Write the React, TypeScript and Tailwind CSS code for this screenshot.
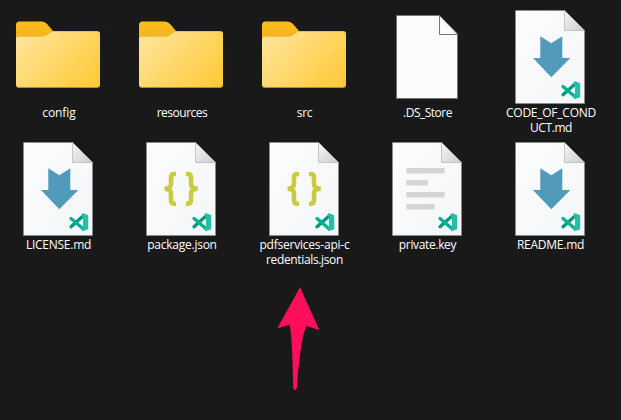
import type { ReactNode } from "react";

type Kind = "folder" | "blank" | "markdown" | "json" | "text";

interface Item {
  kind: Kind;
  lines: { text: string; style: string }[];
}

const items: Item[] = [
  { kind: "folder", lines: [{ text: "config", style: "tracking-[-0.05px] pl-px" }] },
  { kind: "folder", lines: [{ text: "resources", style: "tracking-[-0.5px] pl-px" }] },
  { kind: "folder", lines: [{ text: "src", style: "tracking-[-0.3px]" }] },
  { kind: "blank", lines: [{ text: ".DS_Store", style: "tracking-[-0.5px]" }] },
  {
    kind: "markdown",
    lines: [
      { text: "CODE_OF_COND", style: "tracking-[-0.25px] pl-px" },
      { text: "UCT.md", style: "tracking-[-0.4px] pl-px" },
    ],
  },
  { kind: "markdown", lines: [{ text: "LICENSE.md", style: "tracking-[-0.25px]" }] },
  { kind: "json", lines: [{ text: "package.json", style: "tracking-[-0.25px] pl-px" }] },
  {
    kind: "json",
    lines: [
      { text: "pdfservices-api-c", style: "tracking-[-0.22px]" },
      { text: "redentials.json", style: "tracking-[-0.35px]" },
    ],
  },
  { kind: "text", lines: [{ text: "private.key", style: "tracking-[-0.35px]" }] },
  { kind: "markdown", lines: [{ text: "README.md", style: "tracking-[-0.25px]" }] },
];

function Folder() {
  return (
    <>
      <path d="M6 16a3.500 3.500 0 0 1 3.500-3.500H31c3 0 4.500 1 6.500 3l5.500 6.500H87a3 3 0 0 1 3 3V50H6z" fill="url(#tab)" />
      <path d="M6 30.500a3 3 0 0 1 3-3H31.500c2.500 0 4-.5 6-2l3.500-2.200c1-.7 2-.8 3.500-.8H87a3 3 0 0 1 3 3V76a3 3 0 0 1-3 3H9a3 3 0 0 1-3-3z" fill="#c48a10" />
      <path d="M6 30.500a3 3 0 0 1 3-3H31.500c2.500 0 4-.5 6-2l3.500-2.200c1-.7 2-.8 3.500-.8H87a3 3 0 0 1 3 3V75a3 3 0 0 1-3 3H9a3 3 0 0 1-3-3z" fill="url(#front)" />
    </>
  );
}

function Blank() {
  return (
    <g fill="#fbfbfb" stroke="#747474">
      <path d="M17.500 6.500H60.500L78.500 25V89.500H17.500z" />
      <path d="M60.500 6.500V25.500H78.500" fill="none" />
    </g>
  );
}

function CodeBadge() {
  return (
    <g>
      <path d="M61 85.700 72.500 75.500" stroke="#009a7c" strokeWidth="3.300" strokeLinecap="round" />
      <path d="M61 77.500 72.500 87.300" stroke="#00b294" strokeWidth="3.300" strokeLinecap="round" />
      <path d="M72.700 72 78.200 74.200V88.300L72.700 90.300 71.300 88.500 73 86V76.500L71.300 74z" fill="#24bfa5" />
    </g>
  );
}

function Page({ children }: { children: ReactNode }) {
  return (
    <>
      <path d="M13.500 1.500H62.500L82.500 21.500V94.500H13.500z" fill="url(#page)" stroke="#8b8c8d" strokeWidth=".8" />
      <path d="M62.500 1.500V21.500H82.500z" fill="url(#fold)" stroke="#b9babb" strokeWidth=".8" />
      {children}
      <CodeBadge />
    </>
  );
}

function Icon({ kind }: { kind: Kind }) {
  return (
    <svg width="97" height="96" viewBox="0 0 97 96" fill="none" className="block">
      <defs>
        <linearGradient id="tab" x1="0" y1="0" x2="0" y2="1">
          <stop offset="0" stopColor="#fdbd1b" />
          <stop offset=".4" stopColor="#f4b61f" />
        </linearGradient>
        <linearGradient id="front" gradientUnits="userSpaceOnUse" x1="14" y1="20" x2="82" y2="84">
          <stop offset="0" stopColor="#ffe59b" />
          <stop offset="1" stopColor="#ffc936" />
        </linearGradient>
        <linearGradient id="page" x1="0" y1="0" x2="1" y2="1">
          <stop offset="0" stopColor="#fbfcfc" />
          <stop offset="1" stopColor="#f5f6f8" />
        </linearGradient>
        <linearGradient id="fold" x1="0" y1="0" x2="1" y2="1">
          <stop offset="0" stopColor="#f7f7f7" />
          <stop offset="1" stopColor="#cccccc" />
        </linearGradient>
      </defs>
      {kind === "folder" && <Folder />}
      {kind === "blank" && <Blank />}
      {kind === "markdown" && (
        <Page>
          <path d="M38.300 27.300 49.300 34.300 60.300 27.300V49H68.300L49.300 68.300 31 49H38.300z" fill="#519aba" />
        </Page>
      )}
      {kind === "json" && (
        <Page>
          <g stroke="#cbcb41" strokeWidth="4.600">
            <path d="M43 33H41.500Q38 33 38 36.500V42.500Q38 47.700 31.500 47.700Q38 47.700 38 53V59Q38 62.700 41.500 62.700H43" />
            <path d="M53 33H54.500Q58 33 58 36.500V42.500Q58 47.700 64.800 47.700Q58 47.700 58 53V59Q58 62.700 54.500 62.700H53" />
          </g>
        </Page>
      )}
      {kind === "text" && (
        <Page>
          <path d="M27.300 27H65.700v5.600H27.300zM27.300 39H48.700v5.600H27.300zM27.300 51H65.700v5.600H27.300zM27.300 63H55.700v5.600H27.300z" fill="#d4d6d6" />
        </Page>
      )}
    </svg>
  );
}

export default function App() {
  return (
    <main className="relative h-[420px] w-[621px] overflow-hidden bg-[#191919] pt-[9px] font-['Open_Sans','Noto_Sans',sans-serif] text-white">
      <div className="-ml-[3px] grid grid-cols-[repeat(5,123px)] grid-rows-[132px_132px]">
        {items.map((item) => (
          <div key={item.lines[0].text} className="flex flex-col items-center">
            <Icon kind={item.kind} />
            <div className="flex flex-col items-center text-[12px] leading-[15px] whitespace-nowrap">
              {item.lines.map((line) => (
                <span key={line.text} className={line.style}>{line.text}</span>
              ))}
            </div>
          </div>
        ))}
      </div>
      <svg className="absolute top-[280px] left-[270px]" width="60" height="120" viewBox="270 280 60 120">
        <path d="M300 287.300 277.300 328.200 289.500 324.700C291.500 334 292.500 350 293.300 388Q293.600 390 295 390Q296.600 390 296.800 388C299 362 301.500 336 306.500 326L319.500 330.300z" fill="#ff0f5b" />
      </svg>
    </main>
  );
}
